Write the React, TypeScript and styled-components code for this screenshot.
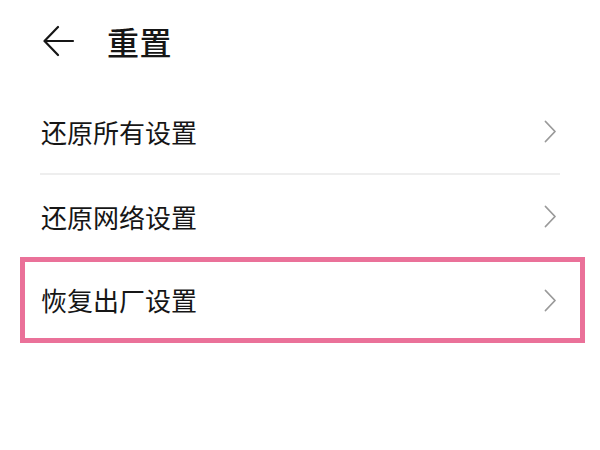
import React from "react";
import styled, { createGlobalStyle } from "styled-components";

const GlobalStyle = createGlobalStyle`
  html, body {
    margin: 0;
    padding: 0;
    background: #ffffff;
  }
  body {
    font-family: "Noto Sans CJK SC", "Noto Sans", sans-serif;
    color: #161616;
  }
`;

const Page = styled.div`
  width: 600px;
  height: 450px;
  background: #ffffff;
  overflow: hidden;
`;

const Header = styled.header`
  height: 82px;
  display: flex;
  align-items: center;
  padding-left: 43px;
`;

const BackButton = styled.button`
  display: flex;
  align-items: center;
  justify-content: center;
  padding: 0;
  border: none;
  background: none;
  width: 32px;
  height: 32px;
  cursor: pointer;
`;

const Title = styled.h1`
  margin: 0 0 0 32px;
  font-size: 32px;
  font-weight: 500;
  line-height: 1;
  color: #161616;
  letter-spacing: 0.5px;
`;

const List = styled.ul`
  list-style: none;
  margin: 8px 0 0;
  padding: 0 40px;
`;

const Item = styled.li<{ $highlight?: boolean }>`
  display: flex;
  align-items: center;
  justify-content: space-between;
  height: ${({ $highlight }) => ($highlight ? "76px" : "83px")};
  ${({ $highlight }) =>
    $highlight &&
    `
    margin: -1px -25px 0 -20px;
    padding: 0 20px 0 15px;
    border: 5px solid #ea7199;
  `}
`;

const Label = styled.span`
  font-size: 26px;
  font-weight: 400;
  line-height: 1;
  color: #161616;
  padding-left: 1px;
`;

const Divider = styled.li`
  height: 2px;
  background: #eeeeee;
`;

const Chevron = styled.svg`
  width: 13px;
  height: 23px;
  margin-right: 3px;
  flex-shrink: 0;
`;

const ArrowRight = () => (
  <Chevron viewBox="0 0 13 23" fill="none">
    <path d="M1.5 1.5 L11 11.5 L1.5 21.5" stroke="#9a9a9a" strokeWidth="1.8" strokeLinecap="round" strokeLinejoin="round" />
  </Chevron>
);

const BackArrow = () => (
  <svg width="32" height="32" viewBox="0 0 32 32" fill="none">
    <path d="M30 16 H2 M15 2 L1.5 16 L15 30" stroke="#161616" strokeWidth="2.2" strokeLinecap="round" strokeLinejoin="round" />
  </svg>
);

const items = ["还原所有设置", "还原网络设置"];

export default function App() {
  return (
    <Page>
      <GlobalStyle />
      <Header>
        <BackButton aria-label="返回">
          <BackArrow />
        </BackButton>
        <Title>重置</Title>
      </Header>
      <List>
        <Item>
          <Label>{items[0]}</Label>
          <ArrowRight />
        </Item>
        <Divider />
        <Item>
          <Label>{items[1]}</Label>
          <ArrowRight />
        </Item>
        <Item $highlight>
          <Label>恢复出厂设置</Label>
          <ArrowRight />
        </Item>
      </List>
    </Page>
  );
}
